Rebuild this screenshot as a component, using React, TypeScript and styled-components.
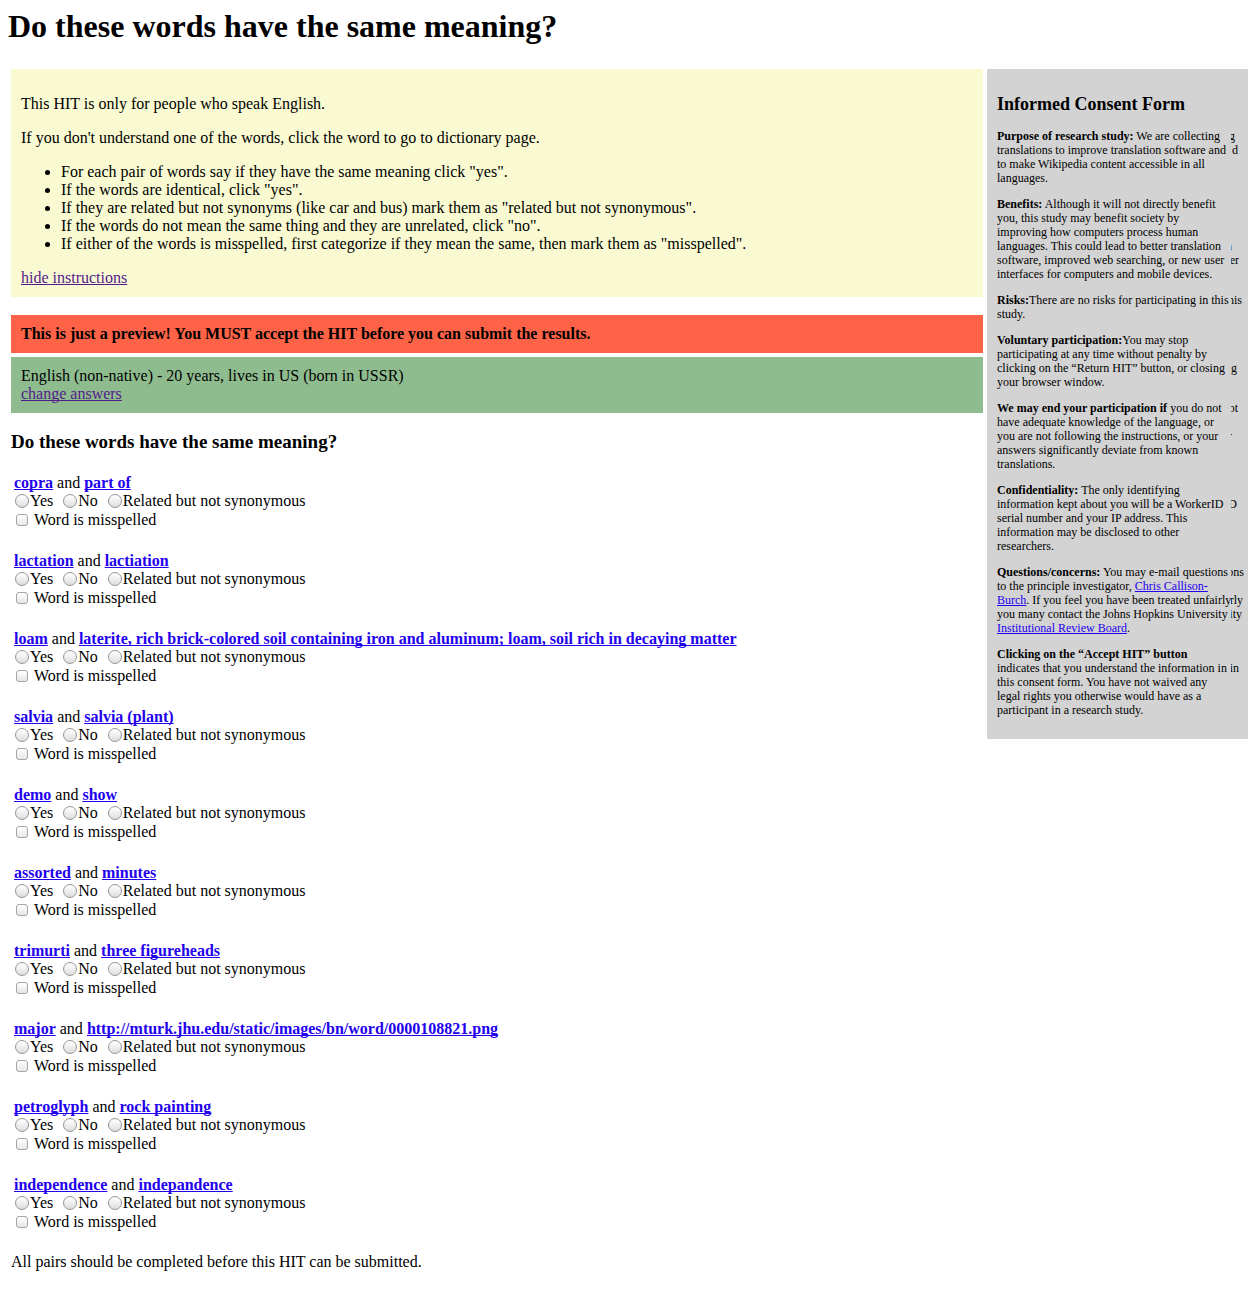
import React, { Fragment } from "react";
import styled, { createGlobalStyle } from "styled-components";

const GlobalStyle = createGlobalStyle`
  body {
    margin: 8px 0 8px 8px;
    background: #fff;
    color: #000;
    font-family: "Liberation Serif", "Times New Roman", Times, serif;
    font-size: 16px;
    line-height: 18px;
  }
`;

const Title = styled.h1`
  margin: 0 0 24px;
  font-size: 32px;
  line-height: 37px;
`;

const Columns = styled.div`
  display: flex;
  align-items: flex-start;
  gap: 4px;
  padding-left: 3px;
`;

const Main = styled.main`
  flex: 1;
  min-width: 0;
`;

const Box = styled.section<{ $color: string; $gap: number }>`
  padding: 10px;
  margin-bottom: ${(p) => p.$gap}px;
  background: ${(p) => p.$color};
`;

const Intro = styled.p`
  margin: 16px 0;
`;

const Rules = styled.ul`
  margin: 16px 0;
  padding-left: 40px;
`;

const Notice = styled.strong`
  display: block;
`;

const Link = styled.a<{ $visited?: boolean }>`
  color: ${(p) => (p.$visited ? "#551a8b" : "#2200ee")};
  text-decoration: underline;
  text-decoration-skip-ink: none;
`;

const WordLink = styled(Link)`
  font-weight: bold;
`;

const Heading = styled.h3`
  margin: 0;
  font-size: 19px;
  line-height: 22px;
`;

const ConsentHeading = styled.h2`
  margin: 0 0 14px;
  font-size: 18px;
  line-height: 22px;
`;

const Pairs = styled.div`
  display: grid;
  gap: 22px;
  padding: 21px 3px;
`;

const Pair = styled.div`
  display: grid;
`;

const Answers = styled.div`
  display: flex;
  gap: 9px;
  height: 18px;
`;

const Choice = styled.label<{ $gap: number }>`
  display: flex;
  align-items: center;
  gap: ${(p) => p.$gap}px;
`;

const Misspelled = styled(Choice)`
  height: 20px;
  padding-left: 2px;
`;

const Radio = styled.input`
  appearance: none;
  box-sizing: border-box;
  width: 14px;
  height: 14px;
  margin: 0 0 0 1px;
  border: 1px solid #969696;
  border-radius: 50%;
  background: linear-gradient(#fff, #dedede);
  &:checked {
    background: radial-gradient(circle, #333 3px, #eee 4px);
  }
`;

const Checkbox = styled.input`
  appearance: none;
  box-sizing: border-box;
  width: 12px;
  height: 12px;
  margin: 0;
  border: 1px solid #a6a6a6;
  border-radius: 3px;
  background: linear-gradient(#fff, #e6e6e6);
  &:checked {
    background: #555;
  }
`;

const Consent = styled.aside`
  box-sizing: border-box;
  flex: 0 0 261px;
  padding: 24px 10px 22px;
  background: #d3d3d3;
  overflow: hidden;
`;

const Clause = styled.p`
  position: relative;
  margin: 0;
  font-size: 12px;
  line-height: 14px;
  white-space: nowrap;
  & + & {
    margin-top: 12px;
  }
`;

const EdgeStrip = styled.span`
  position: absolute;
  top: 0;
  left: 234px;
`;

const EdgeLine = styled.span<{ $width: number }>`
  display: flex;
  justify-content: flex-end;
  width: ${(p) => p.$width}px;
  height: 14px;
  overflow: hidden;
`;

const pairs: [string, string][] = [
  ["copra", "part of"],
  ["lactation", "lactiation"],
  ["loam", "laterite, rich brick-colored soil containing iron and aluminum; loam, soil rich in decaying matter"],
  ["salvia", "salvia (plant)"],
  ["demo", "show"],
  ["assorted", "minutes"],
  ["trimurti", "three figureheads"],
  ["major", "http://mturk.jhu.edu/static/images/bn/word/0000108821.png"],
  ["petroglyph", "rock painting"],
  ["independence", "indepandence"],
];

const choices = ["Yes", "No", "Related but not synonymous"];

type Edge = [text: string, width: number];
type ClauseData = { lines: React.ReactNode[]; edges: (Edge | null)[] };

const clauses: ClauseData[] = [
  {
    lines: [
      <><b>Purpose of research study:</b> We are collecting</>,
      "translations to improve translation software and",
      "to make Wikipedia content accessible in all",
      "languages.",
    ],
    edges: [["g", 4], ["d", 7]],
  },
  {
    lines: [
      <><b>Benefits:</b> Although it will not directly benefit</>,
      "you, this study may benefit society by",
      "improving how computers process human",
      "languages. This could lead to better translation",
      "software, improved web searching, or new user",
      "interfaces for computers and mobile devices.",
    ],
    edges: [null, null, null, ["n", 1], ["er", 8]],
  },
  {
    lines: [<><b>Risks:</b>There are no risks for participating in this</>, "study."],
    edges: [["his", 11]],
  },
  {
    lines: [
      <><b>Voluntary participation:</b>You may stop</>,
      "participating at any time without penalty by",
      "clicking on the “Return HIT” button, or closing",
      "your browser window.",
    ],
    edges: [null, null, ["g", 6]],
  },
  {
    lines: [
      <><b>We may end your participation if</b> you do not</>,
      "have adequate knowledge of the language, or",
      "you are not following the instructions, or your",
      "answers significantly deviate from known",
      "translations.",
    ],
    edges: [["ot", 7], null, ["r", 1]],
  },
  {
    lines: [
      <><b>Confidentiality:</b> The only identifying</>,
      "information kept about you will be a WorkerID",
      "serial number and your IP address. This",
      "information may be disclosed to other",
      "researchers.",
    ],
    edges: [null, ["D", 6]],
  },
  {
    lines: [
      <><b>Questions/concerns:</b> You may e-mail questions</>,
      <>to the principle investigator, <Link href="#investigator">Chris Callison-</Link></>,
      <><Link href="#investigator">Burch</Link>. If you feel you have been treated unfairly</>,
      "you many contact the Johns Hopkins University",
      <><Link href="#review-board">Institutional Review Board</Link>.</>,
    ],
    edges: [["ons", 13], null, ["rly", 12], ["ity", 11]],
  },
  {
    lines: [
      <b>Clicking on the “Accept HIT” button</b>,
      "indicates that you understand the information in",
      "this consent form. You have not waived any",
      "legal rights you otherwise would have as a",
      "participant in a research study.",
    ],
    edges: [null, ["in", 8]],
  },
];

function WordPair({ index, words }: { index: number; words: [string, string] }) {
  return (
    <Pair>
      <div>
        <WordLink href="#first">{words[0]}</WordLink> and <WordLink href="#second">{words[1]}</WordLink>
      </div>
      <Answers>
        {choices.map((choice) => (
          <Choice key={choice} $gap={1}>
            <Radio type="radio" name={`pair-${index}`} />
            {choice}
          </Choice>
        ))}
      </Answers>
      <Misspelled $gap={6}>
        <Checkbox type="checkbox" />
        Word is misspelled
      </Misspelled>
    </Pair>
  );
}

function ConsentClause({ lines, edges }: ClauseData) {
  return (
    <Clause>
      {lines.map((line, i) => (
        <Fragment key={i}>
          {i > 0 && <br />}
          {line}
        </Fragment>
      ))}
      <EdgeStrip aria-hidden="true">
        {edges.map((edge, i) => (
          <EdgeLine key={i} $width={edge ? edge[1] : 0}>
            {edge && <span>{edge[0]}</span>}
          </EdgeLine>
        ))}
      </EdgeStrip>
    </Clause>
  );
}

export default function App() {
  return (
    <>
      <GlobalStyle />
      <Title>Do these words have the same meaning?</Title>
      <Columns>
        <Main>
          <Box $color="#fafad2" $gap={18}>
            <Intro>This HIT is only for people who speak English.</Intro>
            <Intro>If you don't understand one of the words, click the word to go to dictionary page.</Intro>
            <Rules>
              <li>For each pair of words say if they have the same meaning click "yes".</li>
              <li>If the words are identical, click "yes".</li>
              <li>If they are related but not synonyms (like car and bus) mark them as "related but not synonymous".</li>
              <li>If the words do not mean the same thing and they are unrelated, click "no".</li>
              <li>If either of the words is misspelled, first categorize if they mean the same, then mark them as "misspelled".</li>
            </Rules>
            <Link href="#instructions" $visited>hide instructions</Link>
          </Box>
          <Box $color="#ff6347" $gap={4}>
            <Notice>This is just a preview! You MUST accept the HIT before you can submit the results.</Notice>
          </Box>
          <Box $color="#8fbc8f" $gap={18}>
            English (non-native) - 20 years, lives in US (born in USSR)
            <br />
            <Link href="#answers" $visited>change answers</Link>
          </Box>
          <Heading>Do these words have the same meaning?</Heading>
          <Pairs>
            {pairs.map((words, i) => (
              <WordPair key={i} index={i} words={words} />
            ))}
          </Pairs>
          <div>All pairs should be completed before this HIT can be submitted.</div>
        </Main>
        <Consent>
          <ConsentHeading>Informed Consent Form</ConsentHeading>
          {clauses.map((clause, i) => (
            <ConsentClause key={i} {...clause} />
          ))}
        </Consent>
      </Columns>
    </>
  );
}
